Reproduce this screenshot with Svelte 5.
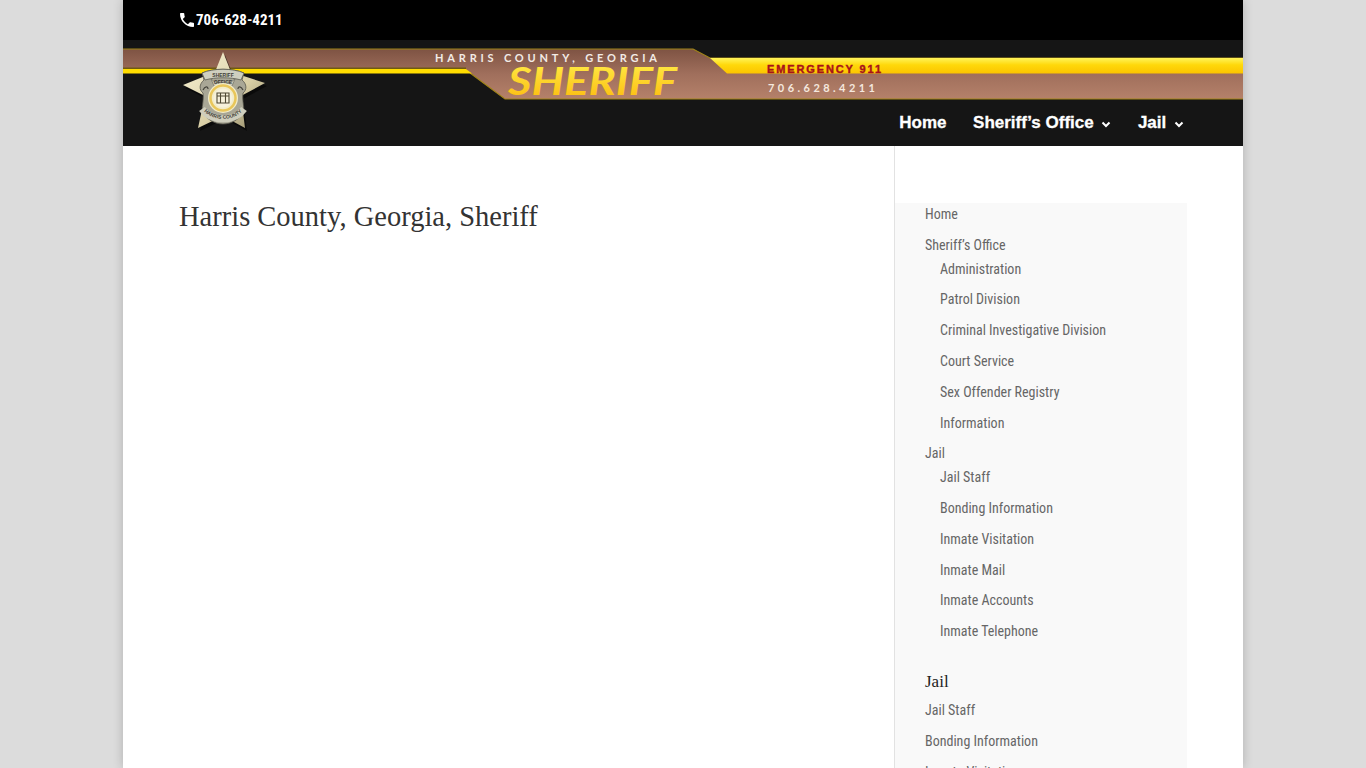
<script>
  const navItems = [
    { label: "Home", hasMenu: false },
    { label: "Sheriff’s Office", hasMenu: true },
    { label: "Jail", hasMenu: true }
  ];

  const menu = [
    { label: "Home", children: [] },
    {
      label: "Sheriff’s Office",
      children: [
        "Administration",
        "Patrol Division",
        "Criminal Investigative Division",
        "Court Service",
        "Sex Offender Registry",
        "Information"
      ]
    },
    {
      label: "Jail",
      children: [
        "Jail Staff",
        "Bonding Information",
        "Inmate Visitation",
        "Inmate Mail",
        "Inmate Accounts",
        "Inmate Telephone"
      ]
    }
  ];

  const jailLinks = ["Jail Staff", "Bonding Information", "Inmate Visitation"];
</script>

<div class="page">
  <div class="topbar">
    <svg class="phone" viewBox="3 3 18 18" width="14" height="14">
      <path
        fill="#fff"
        d="M6.6 10.8c1.4 2.8 3.8 5.1 6.6 6.6l2.2-2.2c.3-.3.7-.4 1-.2 1.1.4 2.3.6 3.6.6.6 0 1 .4 1 1V20c0 .6-.4 1-1 1C10.6 21 3 13.4 3 4c0-.6.4-1 1-1h3.5c.6 0 1 .4 1 1 0 1.3.2 2.5.6 3.6.1.3 0 .7-.2 1l-2.3 2.2z"
      />
    </svg>
    <span class="phone-number">706-628-4211</span>
  </div>

  <header class="header">
    <svg class="banner" viewBox="0 0 1120 106" width="1120" height="106">
      <defs>
        <linearGradient id="brown" x1="0" y1="0" x2="0" y2="1">
          <stop offset="0" stop-color="#7e5343" />
          <stop offset="0.5" stop-color="#a06f5c" />
          <stop offset="1" stop-color="#b5816a" />
        </linearGradient>
        <linearGradient id="yellow" x1="0" y1="0" x2="0" y2="1">
          <stop offset="0" stop-color="#fff45a" />
          <stop offset="0.45" stop-color="#ffd80a" />
          <stop offset="1" stop-color="#fcc400" />
        </linearGradient>
        <linearGradient id="gold" x1="0" y1="0" x2="0" y2="1">
          <stop offset="0" stop-color="#fff04c" />
          <stop offset="1" stop-color="#fcb90c" />
        </linearGradient>
        <linearGradient id="star" x1="0" y1="0" x2="1" y2="1">
          <stop offset="0" stop-color="#fbf5d8" />
          <stop offset="0.6" stop-color="#d9cfa6" />
          <stop offset="1" stop-color="#8f8664" />
        </linearGradient>
        <path id="lower-arc" d="M-21 21C-12 34 12 34 21 21" />
      </defs>

      <path d="M0 9H570L587 18H1120V59H382L347 33H0Z" fill="url(#brown)" />
      <path d="M0 9H570L587 18H1120M1120 59H382L347 33" fill="none" stroke="#a08418" stroke-width="1.200" />
      <path d="M0 29H343L349 33.500H0Z" fill="#ffdc00" />
      <rect x="0" y="27.500" width="343" height="1.500" fill="#6f5a12" />
      <path d="M587 18H1120V33.500H604Z" fill="url(#yellow)" />

      <text x="312" y="22" class="county" textLength="222" lengthAdjust="spacing">HARRIS COUNTY, GEORGIA</text>
      <text x="385" y="55" class="sheriff" textLength="169" lengthAdjust="spacingAndGlyphs">SHERIFF</text>
      <text x="644" y="32.500" class="emergency" textLength="114" lengthAdjust="spacing">EMERGENCY 911</text>
      <text x="645" y="52.300" class="numbers" textLength="107" lengthAdjust="spacing">706.628.4211</text>

      <g transform="translate(100 48)">
        <polygon
          points="0,-36 8,-16 42,-5 18,8 22,40 0,28 -25,40 -18,8 -40,-3 -8,-16"
          fill="#000"
          opacity="0.5"
          transform="translate(2 3)"
        />
        <polygon points="0,-36 8,-16 42,-5 18,8 22,40 0,28 -25,40 -18,8 -40,-3 -8,-16" fill="url(#star)" />
        <path
          d="M-21 -15C-10 -20 10 -20 21 -15L19 -8C24 -4 24 2 20 5C19 14 22 20 20 24C12 40 -12 40 -20 24C-22 20 -19 14 -20 5C-24 2 -24 -4 -19 -8Z"
          fill="#a9a796"
          stroke="#55544a"
          stroke-width="0.800"
        />
        <path d="M-21 -15C-10 -20 10 -20 21 -15L18 -8C8 -11 -8 -11 -18 -8Z" fill="#cfcfbf" stroke="#4e4d44" stroke-width="0.700" />
        <text y="-11.500" class="badge-text">SHERIFF</text>
        <path d="M-12 -9C-6 -3 6 -3 12 -9L9 -2H-9Z" fill="#c8c7b6" stroke="#66655a" stroke-width="0.600" />
        <text y="-4" class="badge-text">OFFICE</text>
        <path d="M-20 2C-18 -2 -15 -2 -15 1M20 2C18 -2 15 -2 15 1" fill="none" stroke="#45443c" stroke-width="1.200" />
        <use href="#lower-arc" fill="none" stroke="#cfcebd" stroke-width="7" />
        <text class="badge-text">
          <textPath href="#lower-arc" startOffset="50%">HARRIS COUNTY</textPath>
        </text>
        <circle r="15" cy="10" fill="#f2ecc9" />
        <circle r="12.500" cy="10" fill="none" stroke="#e9c65a" stroke-width="2.500" />
        <circle r="9.500" cy="10" fill="#f6f1dc" />
        <path d="M-6 5H6V15H-6ZM-6 8H6M-2.500 5V15M2.500 5V15" fill="none" stroke="#4f4934" stroke-width="1.100" />
      </g>
    </svg>

    <nav class="nav">
      {#each navItems as item}
        <span class="nav-item">
          {item.label}
          {#if item.hasMenu}
            <svg class="chevron" viewBox="0 0 10 7" width="10" height="7">
              <path d="M1.500 1.500L5 5L8.500 1.500" fill="none" stroke="#fff" stroke-width="2" />
            </svg>
          {/if}
        </span>
      {/each}
    </nav>
  </header>

  <main class="content">
    <section class="article">
      <h1>Harris County, Georgia, Sheriff</h1>
    </section>

    <aside class="sidebar">
      <div class="widget">
        <ul class="menu">
          {#each menu as item}
            <li>
              {item.label}
              {#if item.children.length}
                <ul class="submenu">
                  {#each item.children as child}
                    <li>{child}</li>
                  {/each}
                </ul>
              {/if}
            </li>
          {/each}
        </ul>

        <h4>Jail</h4>
        <ul class="menu">
          {#each jailLinks as link}
            <li>{link}</li>
          {/each}
        </ul>
      </div>
    </aside>
  </main>
</div>

<style>
  :global(html),
  :global(body) {
    height: 100%;
    overflow: hidden;
  }

  :global(body) {
    background-color: #dcdcdc;
  }

  .page {
    width: 1120px;
    height: 768px;
    margin: 0 auto;
    overflow: hidden;
    background-color: #fff;
    box-shadow: 0 0 10px rgba(0, 0, 0, 0.2);
    display: flex;
    flex-direction: column;
  }

  .topbar {
    height: 39px;
    padding-bottom: 1px;
    flex: none;
    background-color: #000;
    padding-left: 57px;
    display: flex;
    align-items: center;
    gap: 2px;
  }

  .phone-number {
    color: #fff;
    font-family: "Liberation Sans Narrow", "Roboto Condensed", Roboto, sans-serif;
    font-weight: 700;
    font-size: 15px;
  }

  .header {
    height: 106px;
    flex: none;
    background-color: #151515;
    display: grid;
  }

  .banner {
    grid-area: 1 / 1;
    display: block;
  }

  .county {
    fill: #f2ebe6;
    font-family: Lato, sans-serif;
    font-weight: 700;
    font-size: 11px;
  }

  .sheriff {
    fill: url(#gold);
    font-family: Lato, sans-serif;
    font-weight: 700;
    font-style: italic;
    font-size: 39px;
  }

  .emergency {
    fill: #a8121b;
    stroke: #a8121b;
    stroke-width: 0.4px;
    font-family: "Liberation Sans", Arial, sans-serif;
    font-weight: 700;
    font-size: 11px;
  }

  .numbers {
    fill: #f5e8de;
    font-family: Lato, sans-serif;
    font-weight: 700;
    font-size: 11px;
  }

  .badge-text {
    fill: #3f3e36;
    font-family: "Liberation Sans", Arial, sans-serif;
    font-weight: 700;
    font-size: 5px;
    text-anchor: middle;
  }

  .nav {
    grid-area: 1 / 1;
    align-self: start;
    justify-self: end;
    margin-top: 73px;
    padding-right: 59px;
    display: flex;
    gap: 26.500px;
  }

  .nav-item {
    color: #fff;
    font-family: "Liberation Sans", Arial, sans-serif;
    font-weight: 700;
    font-size: 17px;
    line-height: 20px;
    white-space: nowrap;
    -webkit-text-stroke: 0.3px #fff;
  }

  .chevron {
    margin-left: 3px;
  }

  .content {
    flex: 1;
    display: flex;
    padding: 0 56px;
  }

  .article {
    flex: 1;
    padding-top: 56px;
  }

  h1 {
    margin: 0;
    color: #333;
    font-family: "Liberation Serif", Georgia, serif;
    font-weight: 400;
    font-size: 28.500px;
    line-height: 30px;
  }

  .sidebar {
    width: 292px;
    flex: none;
    border-left: 1px solid #e2e2e2;
    padding-top: 57px;
  }

  .widget {
    background-color: #f9f9f9;
    padding-left: 30px;
    height: 100%;
  }

  ul {
    list-style: none;
    margin: 0;
    padding: 0;
  }

  .menu,
  .submenu {
    color: #666;
    font-family: "Liberation Sans Narrow", "Roboto Condensed", Roboto, sans-serif;
    font-size: 14px;
    line-height: 23.800px;
  }

  .submenu {
    padding-left: 15px;
  }

  li + li {
    margin-top: 7px;
  }

  h4 {
    margin: 26px 0 5px;
    color: #222;
    font-family: "Liberation Serif", Georgia, serif;
    font-weight: 400;
    font-size: 17px;
    line-height: 24px;
  }
</style>
